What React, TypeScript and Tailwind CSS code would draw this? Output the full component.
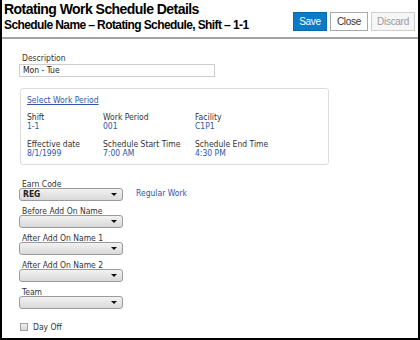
import React from 'react';

const body = "font-['DejaVu_Sans_Condensed','DejaVu_Sans',sans-serif] [font-stretch:condensed]";

function Field({ label, value }: { label: string; value: string }) {
  return (
    <div>
      <div className="text-[8.5px] leading-[9px] text-[#333]">{label}</div>
      <div className="text-[8.5px] leading-[9px] text-[#2f55a8]">{value}</div>
    </div>
  );
}

function Select({ value }: { value?: string }) {
  return (
    <div className="relative w-[104px] h-[13px] rounded-[3px] border border-[#9a9a9a] bg-gradient-to-b from-[#f2f2f2] to-[#d9d9d9] flex items-center pl-[3px]">
      <span className="text-[8.5px] leading-none text-[#222] font-semibold">{value}</span>
      <span className="absolute right-[5px] top-[4px] w-0 h-0 border-x-[3px] border-x-transparent border-t-[3px] border-t-[#111]" />
    </div>
  );
}

function Group({ label, value, aside }: { label: string; value?: string; aside?: string }) {
  return (
    <div className="mb-[6px]">
      <div className="pl-[3px] text-[8.5px] leading-[8px] text-[#333]">{label}</div>
      <div className="flex items-start gap-[13px]">
        <Select value={value} />
        {aside && <span className="text-[8.5px] leading-[10px] text-[#2f55a8]">{aside}</span>}
      </div>
    </div>
  );
}

export default function App() {
  return (
    <div className="w-[420px] h-[340px] bg-white border-x-2 border-b-2 border-black overflow-hidden flex flex-col">
      {/* Header */}
      <div className="flex justify-between items-start pl-[2px] pr-[3px] h-[39px] border-b-2 border-[#a3a3a3] font-['Liberation_Sans',Arial,sans-serif]">
        <div className="pt-[1px]">
          <h1 className="text-[14px] leading-[17px] font-bold tracking-[-0.55px] text-black">Rotating Work Schedule Details</h1>
          <h2 className="text-[12px] leading-[14px] font-bold tracking-[-0.6px] text-black">Schedule Name – Rotating Schedule, Shift – 1-1</h2>
        </div>
        <div className="flex items-center mt-[12px] text-[10px] tracking-[-0.3px]">
          <button className="w-[34px] h-[19px] bg-[#0a7bc6] border border-[#0868a8] text-white">Save</button>
          <button className="ml-[3px] w-[38px] h-[19px] bg-white border border-[#a8a8a8] text-[#333]">Close</button>
          <button className="ml-[3px] w-[44px] h-[19px] bg-[#f6f6f6] border border-[#cfcfcf] text-[#9a9a9a]">Discard</button>
        </div>
      </div>

      {/* Form */}
      <div className={`${body} pl-[17px] pt-[14px]`}>
        <div className="pl-[3px] text-[8.5px] leading-[10px] text-[#333]">Description</div>
        <div className="w-[196px] h-[13px] mt-[1px] border border-[#cdcdcd] pl-[3px] text-[8.5px] leading-[11px] text-[#222]">Mon - Tue</div>

        <div className="mt-[11px] ml-[1px] w-[309px] h-[77px] border border-[#dcdcdc] rounded-[3px] pl-[6px] pt-[6px]">
          <a className="block text-[8.5px] leading-[10px] text-[#2f55a8] underline">Select Work Period</a>
          <div className="grid grid-cols-[76px_92px_1fr] mt-[8px] gap-y-[9px]">
            <Field label="Shift" value="1-1" />
            <Field label="Work Period" value="001" />
            <Field label="Facility" value="C1P1" />
            <Field label="Effective date" value="8/1/1999" />
            <Field label="Schedule Start Time" value="7:00 AM" />
            <Field label="Schedule End Time" value="4:30 PM" />
          </div>
        </div>

        <div className="mt-[15px]">
          <Group label="Earn Code" value="REG" aside="Regular Work" />
          <Group label="Before Add On Name" />
          <Group label="After Add On Name 1" />
          <Group label="After Add On Name 2" />
          <Group label="Team" />
        </div>

        <label className="mt-[13px] flex items-center gap-[5px] pl-[1px]">
          <span className="w-[8px] h-[8px] border border-[#a0a0a0] bg-gradient-to-b from-[#eee] to-[#d8d8d8]" />
          <span className="text-[8.5px] leading-[10px] text-[#333]">Day Off</span>
        </label>
      </div>
    </div>
  );
}
